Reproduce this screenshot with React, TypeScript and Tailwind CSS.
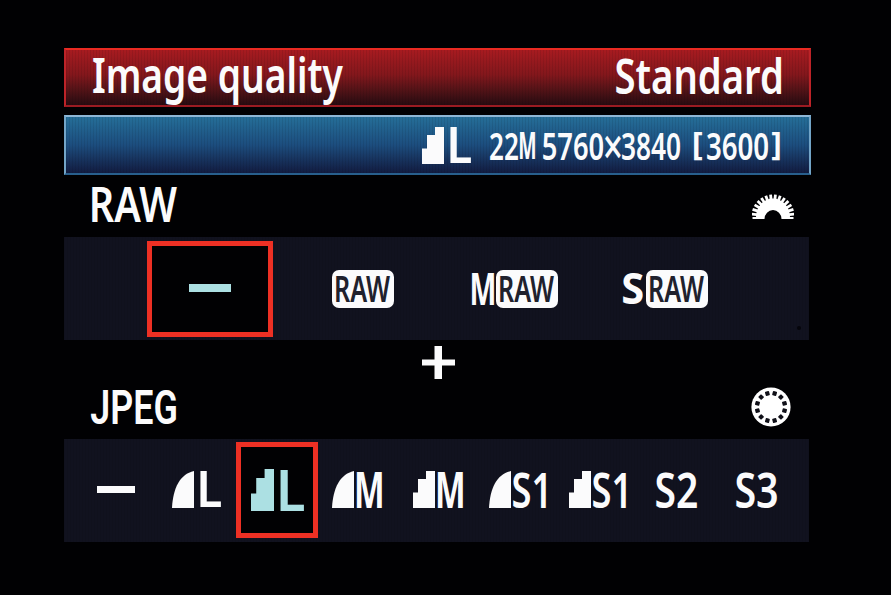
import React from "react";

const FAMILY = '"Noto Sans", "Open Sans", sans-serif';
const ctx = document.createElement("canvas").getContext("2d")!;

type LabelProps = { text: string; w: number; cap: number; weight?: number; family?: string; className?: string };

/* Condensed label whose glyphs fill a box of the given width and cap height. */
function Label({ text, w, cap, weight = 600, family = FAMILY, className = "" }: LabelProps) {
  ctx.font = `${weight} 100px ${family}`;
  const size = (cap / ctx.measureText("E").actualBoundingBoxAscent) * 100;
  const k = size / 100;
  const m = ctx.measureText(text);
  const scale = w / ((m.actualBoundingBoxRight + m.actualBoundingBoxLeft) * k);
  const dx = m.actualBoundingBoxLeft * k * scale;
  const baseline = size / 2 + ((m.fontBoundingBoxAscent - m.fontBoundingBoxDescent) * k) / 2;
  return (
    <div className={`shrink-0 ${className}`} style={{ width: w, height: cap }}>
      <span
        className="block w-max origin-top-left whitespace-pre leading-none"
        style={{
          fontFamily: family,
          fontSize: size,
          fontWeight: weight,
          transform: `translate(${dx}px, ${cap - baseline + 0.5}px) scaleX(${scale})`,
        }}
      >
        {text}
      </span>
    </div>
  );
}

function Fine({ className = "" }: { className?: string }) {
  return (
    <svg viewBox="0 0 22 37" preserveAspectRatio="none" className={`h-[37px] w-[22px] shrink-0 fill-current ${className}`}>
      <path d="M0 37C1 17 8 3 22 0V37Z" />
    </svg>
  );
}

function Normal({ className = "h-[37px] w-[22px]" }: { className?: string }) {
  return (
    <svg viewBox="0 0 22 37" preserveAspectRatio="none" className={`shrink-0 fill-current ${className}`}>
      <path d="M0 37V21.5H5V8H13V0H22V37Z" />
    </svg>
  );
}

function RawBadge() {
  return (
    <div className="flex h-[38px] w-[62px] shrink-0 justify-center rounded-[7px] bg-[#fbfbfc] pt-[6px] text-[#20212d]">
      <Label text="RAW" w={54} cap={26} weight={600} />
    </div>
  );
}

function MainDial() {
  const teeth = Array.from({ length: 14 }, (_, i) => 180 + 5 + (i * 170) / 13);
  return (
    <svg viewBox="0 0 42 25" className="h-[25px] w-[42px]">
      <path d="M0.500 25V23H4A17 18.500 0 0 1 38 23H41.500V25H29.500A8.500 9 0 0 0 12.500 25Z" fill="#fff" />
      {teeth.map((a) => (
        <rect key={a} x="14" y="-1.4" width="7.500" height="2.8" fill="#fff" transform={`translate(21 22) rotate(${a})`} />
      ))}
    </svg>
  );
}

function QuickDial() {
  const holes = Array.from({ length: 12 }, (_, i) => 15 + i * 30);
  return (
    <svg viewBox="-20 -20 40 40" className="size-[40px]">
      <circle r="19.6" fill="#fff" />
      {holes.map((a) => (
        <rect key={a} x="11.800" y="-2.100" width="4.400" height="4.200" rx="0.8" fill="#101018" transform={`rotate(${a})`} />
      ))}
    </svg>
  );
}

const mesh = "bg-[repeating-linear-gradient(90deg,rgba(0,0,0,0.08)_0px,rgba(0,0,0,0.08)_1px,transparent_1px,transparent_3px)]";

export default function App() {
  return (
    <main className="flex h-[595px] w-[891px] flex-col overflow-hidden bg-[#010103] pl-[64px] pt-[48px] text-[#fbfbfc]">
      <header className="h-[59px] w-[747px] shrink-0 border-2 border-[#9b1b22] border-t-[#ea2a22] border-r-[#bd2328] border-l-[#bd2328] bg-linear-to-b from-[#a71b20] via-[#83171c] via-45% to-[#280b10]">
        <div className={`flex h-full justify-between pl-[27px] pr-[28px] pt-[9px] ${mesh}`}>
          <Label text="Image quality" w={250} cap={34} />
          <Label text="Standard" w={165} cap={34} className="mt-px" />
        </div>
      </header>

      <section className="mt-[8px] h-[60px] w-[747px] shrink-0 border-2 border-[#285f8d] border-t-[#8eb7d6] border-r-[#73a5c8] border-l-[#73a5c8] bg-linear-to-b from-[#256e98] via-[#1c4d7e] via-50% to-[#111c41]">
        <div className={`flex h-full pl-[356px] pt-[10px] ${mesh}`}>
          <Normal />
          <Label text="L" w={21} cap={36} weight={600} className="ml-[6px] mt-px" />
          <Label text="22" w={28} cap={27} className="ml-[19px] mt-[5px]" />
          <Label text="M" w={15} cap={27} weight={700} className="ml-[2px] mt-[5px]" />
          <Label text="5760" w={60} cap={27} className="ml-[8px] mt-[5px]" />
          <Label text="×" w={16} cap={36} weight={500} className="ml-[2px] mt-[2px]" />
          <Label text="3840" w={58} cap={27} className="ml-[1px] mt-[5px]" />
          <Label text="[" w={8} cap={23} weight={700} className="ml-[14px] mt-[5px]" />
          <Label text="3600" w={61} cap={27} className="ml-[5px] mt-[5px]" />
          <Label text="]" w={8} cap={23} weight={700} className="ml-[4px] mt-[5px]" />
        </div>
      </section>

      <div className="flex h-[62px] w-[746px] shrink-0 justify-between pl-[28px] pr-[16px] pt-[13px]">
        <Label text="RAW" w={85} cap={34} />
        <div className="mt-[6px]">
          <MainDial />
        </div>
      </div>

      <section className={`flex h-[103px] w-[745px] shrink-0 items-start bg-[#11121f] ${mesh}`}>
        <div className="ml-[83px] mt-[4px] flex h-[96px] w-[126px] shrink-0 items-center justify-center border-[5px] border-[#ed3024] bg-[#010103]">
          <div className="mb-[2px] h-[8px] w-[42px] bg-[#ace0e3]" />
        </div>
        <div className="ml-[59px] mt-[33px]">
          <RawBadge />
        </div>
        <div className="ml-[78px] mt-[33px] flex">
          <Label text="M" w={22} cap={32} weight={700} className="mt-[3px]" />
          <div className="ml-[2px]">
            <RawBadge />
          </div>
        </div>
        <div className="ml-[65px] mt-[33px] flex">
          <Label text="S" w={20} cap={31} weight={700} className="mt-[3px]" />
          <div className="ml-[3px]">
            <RawBadge />
          </div>
        </div>
        <div className="ml-[89px] mt-[89px] size-[4px] rounded-full bg-[#05050b]" />
      </section>

      <div className="h-[47px] w-[746px] shrink-0 pl-[358px] pt-[6px]">
        <svg viewBox="0 0 33 33" className="size-[33px] fill-current">
          <path d="M12.500 0h7.500v13.500h13v6H20V33h-7.500V19.500H0v-6h12.500Z" />
        </svg>
      </div>

      <div className="flex h-[52px] w-[746px] shrink-0 justify-between pl-[27px] pr-[19px]">
        <Label text="JPEG" w={85} cap={34} weight={600} family={'"Roboto", sans-serif'} className="mt-[3px]" />
        <QuickDial />
      </div>

      <section className={`flex h-[103px] w-[745px] shrink-0 items-start bg-[#11121f] ${mesh}`}>
        <div className="ml-[33px] mt-[47px] h-[7px] w-[38px] shrink-0 bg-current" />
        <div className="ml-[37px] mt-[32px] flex">
          <Fine />
          <Label text="L" w={21} cap={36} weight={600} className="ml-[6px] mt-px" />
        </div>
        <div className="ml-[15px] mt-[3px] flex h-[96px] w-[82px] shrink-0 border-[5px] border-[#ed3024] bg-[#010103] pl-[10px] pt-[22px] text-[#ace0e3]">
          <Normal className="h-[42px] w-[23px]" />
          <Label text="L" w={24} cap={41} weight={600} className="ml-[6px] mt-px" />
        </div>
        <div className="ml-[14px] mt-[32px] flex">
          <Fine />
          <Label text="M" w={25} cap={36} weight={700} className="ml-[3px] mt-px" />
        </div>
        <div className="ml-[31px] mt-[32px] flex">
          <Normal />
          <Label text="M" w={25} cap={36} weight={700} className="ml-[3px] mt-px" />
        </div>
        <div className="ml-[26px] mt-[32px] flex">
          <Fine />
          <Label text="S1" w={33} cap={35} weight={600} className="ml-[2px] mt-px" />
        </div>
        <div className="ml-[23px] mt-[32px] flex">
          <Normal />
          <Label text="S1" w={33} cap={35} weight={600} className="ml-[2px] mt-px" />
        </div>
        <Label text="S2" w={41} cap={35} className="ml-[30px] mt-[33px]" />
        <Label text="S3" w={41} cap={35} className="ml-[39px] mt-[33px]" />
      </section>
    </main>
  );
}
